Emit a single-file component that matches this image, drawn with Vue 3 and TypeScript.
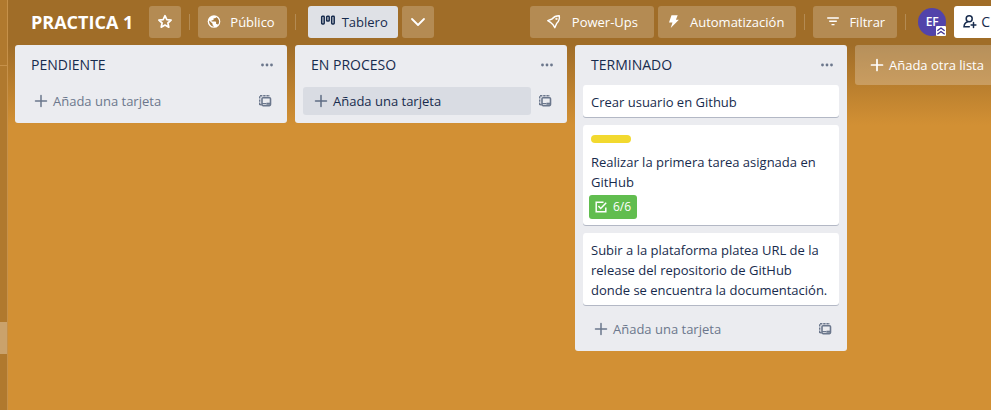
<script setup lang="ts">
interface Card {
  text: string
  label?: boolean
  done?: string
}
interface List {
  title: string
  cards: Card[]
  active?: boolean
}

const lists: List[] = [
  { title: 'PENDIENTE', cards: [] },
  { title: 'EN PROCESO', cards: [], active: true },
  {
    title: 'TERMINADO',
    cards: [
      { text: 'Crear usuario en Github' },
      { text: 'Realizar la primera tarea asignada en GitHub', label: true, done: '6/6' },
      { text: 'Subir a la plataforma platea URL de la release del repositorio de GitHub donde se encuentra la documentación.' },
    ],
  },
]
</script>

<template>
  <div class="app">
    <aside class="rail">
      <div class="rail-top"></div>
      <div class="rail-item"></div>
    </aside>
    <main class="board">
      <header class="bar">
        <h1 class="title">PRACTICA 1</h1>
        <button class="btn square" type="button">
          <svg class="icon" viewBox="0 0 16 16" fill="none" stroke="currentColor" stroke-width="1.7" stroke-linejoin="round">
            <path d="M8 1.7 9.8 5.600 14.100 6.100 10.900 9 11.800 13.200 8 11.100 4.200 13.200 5.100 9 1.900 6.100 6.200 5.600Z" />
          </svg>
        </button>
        <span class="sep"></span>
        <button class="btn public" type="button">
          <svg class="icon" viewBox="0 0 16 16">
            <circle cx="8" cy="7.500" r="6.300" fill="currentColor" />
            <path d="M3.300 6.500 6.600 9.800v1c0 .6.400 1 1 1v.9A5.200 5.200 0 0 1 3.300 6.500ZM11.900 10.800c-.2-.6-.7-.9-1.300-.9h-.500V8.200c0-.4-.3-.7-.7-.7H5.600V6.200h1.300c.4 0 .7-.3.700-.7V4.200h1.300c.7 0 1.300-.5 1.300-1.200a5 5 0 0 1 1.700 7.800Z" fill="#a87c42" />
          </svg>
          Público
        </button>
        <span class="sep"></span>
        <button class="btn light" type="button">
          <svg class="icon" viewBox="0 0 16 16" fill="none" stroke="currentColor" stroke-width="1.500">
            <rect x="1.700" y="2.300" width="2.500" height="7.600" rx=".7" />
            <rect x="6.700" y="2.300" width="2.500" height="4.800" rx=".7" />
            <rect x="11.700" y="2.300" width="2.500" height="7.600" rx=".7" />
          </svg>
          Tablero
        </button>
        <button class="btn square chevron" type="button">
          <svg class="icon" viewBox="0 0 16 16" fill="none" stroke="currentColor" stroke-width="1.800" stroke-linecap="round" stroke-linejoin="round">
            <path d="M2 5 8 11 14 5" />
          </svg>
        </button>
        <div class="tools">
          <button class="btn power" type="button">
            <svg class="icon" viewBox="0 0 16 16" fill="none" stroke="currentColor" stroke-width="1.400" stroke-linejoin="round" stroke-linecap="round">
              <path d="M13.300 1.800C9.900 1.700 7.500 3.200 6 5L1.800 6.700l3.100 2 2.200 2.100 1.700 2.900 1.800-4.100C12.700 7.500 13.800 4.800 13.300 1.800Z" />
              <circle cx="10.500" cy="4.900" r=".4" />
            </svg>
            Power-Ups
          </button>
          <button class="btn auto" type="button">
            <svg class="icon" viewBox="0 0 16 16" fill="currentColor">
              <path d="M5.500 1.300h6.200L9.900 5.700h3L4.700 14 6.500 8.500H3Z" />
            </svg>
            Automatización
          </button>
          <span class="sep"></span>
          <button class="btn filter" type="button">
            <svg class="icon" viewBox="0 0 16 16" fill="none" stroke="currentColor" stroke-width="1.400">
              <path d="M2.200 4h11.600M4.200 7.300h7.600M6.500 10.600h3" />
            </svg>
            Filtrar
          </button>
          <span class="sep"></span>
          <div class="avatar">
            EF
            <svg class="rank" viewBox="0 0 9 9">
              <rect width="9" height="9" rx="1" fill="#fff" />
              <path d="M1.200 4.300 4.500 1.800l3.300 2.500M1.200 7.500 4.500 5l3.300 2.500" fill="none" stroke="#403294" stroke-width="1.200" />
            </svg>
          </div>
          <button class="share" type="button">
            <svg class="icon" viewBox="0 0 16 16" fill="none" stroke="currentColor" stroke-width="1.500" stroke-linecap="round">
              <circle cx="7.200" cy="4.800" r="3" />
              <path d="M5.800 7.800C3.400 8.500 2.200 10.200 2 12.800h5.300M11.500 8.600v4.800M9.100 11h4.800" />
            </svg>
            C
          </button>
        </div>
      </header>

      <div class="lists">
        <section v-for="list in lists" :key="list.title" class="list">
          <div class="list-head">
            <h2>{{ list.title }}</h2>
            <button class="dots" type="button">
              <svg class="icon" viewBox="0 0 16 16" fill="currentColor">
                <circle cx="3.500" cy="8" r="1.400" />
                <circle cx="8" cy="8" r="1.400" />
                <circle cx="12.500" cy="8" r="1.400" />
              </svg>
            </button>
          </div>
          <article v-for="card in list.cards" :key="card.text" class="card">
            <span v-if="card.label" class="label"></span>
            <p>{{ card.text }}</p>
            <span v-if="card.done" class="badge">
              <svg viewBox="0 0 12 12" fill="none" stroke="currentColor" stroke-width="1.500">
                <path d="M8.500 1.200H1.200v9.600h9.600V6.500M3.400 5l2.300 2.500 5.500-5.700" />
              </svg>
              {{ card.done }}
            </span>
          </article>
          <div class="list-foot">
            <button class="add" :class="{ active: list.active }" type="button">
              <svg class="icon" viewBox="0 0 16 16" fill="none" stroke="currentColor" stroke-width="1.500" stroke-linecap="round">
                <path d="M8 2.500v11M2.500 8h11" />
              </svg>
              Añada una tarjeta
            </button>
            <button class="template" type="button">
              <svg class="icon" viewBox="0 0 16 16" fill="none" stroke="currentColor">
                <path d="M2.700 12V2.700H13" stroke-width="1.400" stroke-dasharray="2.400 .8" />
                <path d="M2.700 11.700h2" stroke-width="1.400" />
                <rect x="5" y="4.800" width="8.500" height="7.800" rx="1" stroke-width="1.600" />
                <path d="M5 10.500h4.500" stroke-width="1" />
                <path d="M9.500 10.700h4" stroke-width="2" />
              </svg>
            </button>
          </div>
        </section>
        <button class="new-list" type="button">
          <svg class="icon" viewBox="0 0 16 16" fill="none" stroke="currentColor" stroke-width="1.700" stroke-linecap="round">
            <path d="M8 2.500v11M2.500 8h11" />
          </svg>
          Añada otra lista
        </button>
      </div>
    </main>
  </div>
</template>

<style>
body {
  background: #d29034;
}
</style>

<style scoped>
* {
  box-sizing: border-box;
}
.app {
  display: flex;
  min-height: 100vh;
  overflow: hidden;
  color: #172b4d;
  font: 13px/20px "Segoe UI", "Open Sans", "Noto Sans", sans-serif;
}
h1,
h2,
p {
  margin: 0;
}
button {
  border: 0;
  font: inherit;
  white-space: nowrap;
  cursor: pointer;
}
.icon {
  flex: none;
  width: 16px;
  height: 16px;
}
.rail {
  flex: none;
  width: 8px;
  background: #b0792e;
  border-right: 1px solid #c6914a;
}
.rail-top {
  height: 66px;
  border-bottom: 1px solid #c6914a;
}
.rail-item {
  height: 32px;
  margin-top: 256px;
  background: #caa26c;
}
.board {
  flex: 1;
  min-width: 0;
  background: linear-gradient(#a06d28 45px, #d29034 125px);
}
.bar {
  display: flex;
  align-items: center;
  height: 45px;
  padding: 0 0 2px 23px;
}
.title {
  color: #fff;
  font-size: 18px;
  font-weight: 700;
  line-height: 24px;
  margin-right: 16px;
  white-space: nowrap;
}
.btn {
  display: flex;
  align-items: center;
  gap: 8px;
  height: 32px;
  padding: 0 12px;
  border-radius: 3px;
  background: #b48b53;
  color: #fff;
}
.btn.square {
  padding: 0 8px;
}
.btn.public {
  padding-left: 8px;
}
.btn.light {
  margin-left: 4px;
  padding-right: 10px;
  gap: 6px;
  background: #dfe1e6;
  color: #172b4d;
}
.btn.chevron {
  margin-left: 4px;
}
.btn.power {
  padding: 0 16px;
  gap: 10px;
}
.btn.auto {
  margin-left: 4px;
  padding-left: 8px;
}
.sep {
  flex: none;
  width: 1px;
  height: 16px;
  margin: 0 8px;
  background: #b48b53;
}
.tools {
  display: flex;
  align-items: center;
  margin-left: auto;
}
.avatar {
  position: relative;
  width: 28px;
  height: 28px;
  margin: 0 8px 0 4px;
  border-radius: 50%;
  background: #5243aa;
  color: #fff;
  font-size: 12px;
  font-weight: 600;
  line-height: 28px;
  text-align: center;
}
.rank {
  position: absolute;
  right: 0;
  bottom: 0;
  width: 10px;
  height: 10px;
}
.share {
  display: flex;
  align-items: center;
  gap: 3px;
  height: 32px;
  padding: 0 1px 0 8px;
  border-radius: 3px 0 0 3px;
  background: #fff;
  color: #172b4d;
  font-size: 14px;
}
.lists {
  display: flex;
  align-items: flex-start;
  gap: 8px;
  padding-left: 7px;
}
.list {
  flex: none;
  display: flex;
  flex-direction: column;
  gap: 8px;
  width: 272px;
  padding: 0 8px 8px;
  border-radius: 3px;
  background: #ebecf0;
}
.list-head {
  display: flex;
  align-items: center;
  justify-content: space-between;
  height: 32px;
  padding: 8px 4px 0 8px;
}
.list-head h2 {
  font-size: 14px;
  font-weight: 500;
}
.dots,
.template {
  display: flex;
  padding: 0;
  background: none;
  color: #6b778c;
}
.card {
  padding: 7px 8px 5px;
  border-radius: 3px;
  background: #fff;
  box-shadow: 0 1px 0 #b3b8c5;
}
.label {
  display: block;
  width: 40px;
  height: 8px;
  margin: 3px 0 9px;
  border-radius: 4px;
  background: #f2d92f;
}
.badge {
  display: inline-flex;
  align-items: center;
  gap: 6px;
  height: 24px;
  margin: 3px 0 1px -2px;
  padding: 0 6px;
  border-radius: 3px;
  background: #61bd4f;
  color: #fff;
  font-size: 12px;
  vertical-align: top;
}
.badge svg {
  width: 12px;
  height: 12px;
}
.list-foot {
  display: flex;
  align-items: center;
  gap: 6px;
  margin-top: 2px;
  padding-right: 6px;
}
.add {
  flex: 1;
  display: flex;
  align-items: center;
  gap: 4px;
  height: 28px;
  padding: 0 10px;
  border-radius: 3px;
  background: none;
  color: #6b778c;
}
.add.active {
  background: #d9dce3;
  color: #172b4d;
}
.add.active .icon {
  color: #5e6c84;
}
.new-list {
  flex: 1;
  display: flex;
  align-items: center;
  gap: 4px;
  height: 40px;
  padding: 0 0 0 14px;
  border-radius: 3px 0 0 3px;
  background: #ffffff3d;
  color: #fff;
}
</style>
